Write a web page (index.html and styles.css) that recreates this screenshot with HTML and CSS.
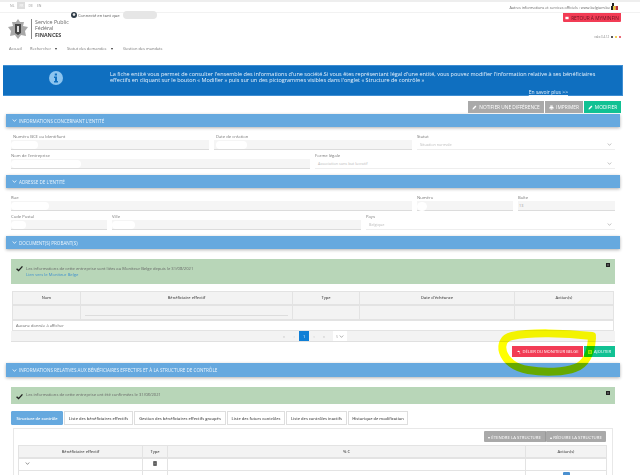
FILE: index.html
```html
<!DOCTYPE html>
<html lang="fr">
<head>
<meta charset="utf-8">
<title>Fiche entité</title>
<link rel="stylesheet" href="styles.css">
</head>
<body>
<svg class="sprite" aria-hidden="true">
  <symbol id="chev" viewBox="0 0 10 10"><path d="M1.5 3 5 6.8 8.500 3" fill="none" stroke="currentColor" stroke-width="1.800"/></symbol>
  <symbol id="check" viewBox="0 0 10 10"><path d="M.8 5.300 3.700 8 9.200 2" fill="none" stroke="currentColor" stroke-width="2"/></symbol>
  <symbol id="pencil" viewBox="0 0 10 10"><path d="M1 9 1.500 6.500 6.800 1.200 8.800 3.200 3.500 8.500Z" fill="currentColor"/></symbol>
  <symbol id="print" viewBox="0 0 10 10"><path d="M2.500 1h5v2.500h-5ZM1 4h8v3.500H7.500V6h-5v1.500H1ZM3 6.500h4V9H3Z" fill="currentColor"/></symbol>
  <symbol id="close" viewBox="0 0 10 10"><path d="M0 0h10v10H0Z" fill="#222"/><path d="M3 3l4 4M7 3 3 7" stroke="#bbb" stroke-width="1"/></symbol>
</svg>
<div class="page">
  <div class="topbar">
    <div class="langs"><span>NL</span><span class="lang-on">FR</span><span>DE</span><span>EN</span></div>
    <div class="official">Autres informations et services officiels : www.belgium.be
      <svg class="be" viewBox="0 0 7 7"><path d="M0 3h2.300v4H0Z" fill="#222"/><path d="M2.300 3h2.300v4H2.300Z" fill="#e8c82a"/><path d="M4.600 3H7v4H4.600Z" fill="#b8323c"/><path d="M1 0h2v3H1Z" fill="#222"/></svg>
    </div>
  </div>
  <header class="header">
    <div class="brand">
      <svg class="crest" viewBox="0 0 20 20"><path d="M10 0 12 3 16 3 15 7 20 8 17 12 18 17 13 16 10 20 7 16 2 17 3 12 0 8 5 7 4 3 8 3Z" fill="#a8a8a8"/><path d="M7 5h6v9l-3 2-3-2Z" fill="#444"/><path d="M9 7h2v6H9Z" fill="#ddd"/></svg>
      <div class="brand-name"><span>Service Public</span><span>Fédéral</span><strong>FINANCES</strong></div>
    </div>
    <div class="user">
      <svg class="user-icon" viewBox="0 0 6 6"><circle cx="3" cy="3" r="3" fill="#2d3a46"/><circle cx="3" cy="2.600" r="1.300" fill="#e8e8e8"/></svg>
      <span>Connecté en tant que</span><i class="mask mask-user"></i>
    </div>
    <div class="header-right">
      <a class="btn btn-back"><svg class="ico" viewBox="0 0 10 10"><path d="M1 2h8v6H1Z" fill="#fff"/></svg>RETOUR À MYMINFIN</a>
      <div class="version">vdex 3.4.12<b class="dot d1"></b><b class="dot d2"></b><b class="dot d3"></b></div>
    </div>
  </header>
  <nav class="nav">
    <a>Accueil</a><a>Rechercher<b class="caret"></b></a><a>Statut des demandes<b class="caret"></b></a><a>Gestion des mandats</a>
  </nav>
  <section class="banner">
    <svg class="info" viewBox="0 0 14 14"><circle cx="7" cy="7" r="7" fill="#8cc4ef"/><path d="M5.800 2.500h2.200v2H5.800ZM5 5.600h3v4.400h1v1.500H5V10h1V7H5Z" fill="#0f6fc0"/></svg>
    <div class="banner-body">
      <p>La fiche entité vous permet de consulter l'ensemble des informations d'une société.Si vous êtes représentant légal d'une entité, vous pouvez modifier l'information relative à ses bénéficiaires<br>effectifs en cliquant sur le bouton « Modifier » puis sur un des pictogrammes visibles dans l'onglet « Structure de contrôle »</p>
      <a>En savoir plus &gt;&gt;</a>
    </div>
  </section>
  <div class="actions">
    <a class="btn btn-grey"><svg class="ico"><use href="#pencil"/></svg>NOTIFIER UNE DIFFÉRENCE</a>
    <a class="btn btn-grey"><svg class="ico"><use href="#print"/></svg>IMPRIMER</a>
    <a class="btn btn-green"><svg class="ico"><use href="#pencil"/></svg>MODIFIER</a>
  </div>

  <h2 class="section"><svg class="ico"><use href="#chev"/></svg>INFORMATIONS CONCERNANT L'ENTITÉ</h2>
  <div class="form">
    <div class="row row-3">
      <div class="field"><label class="indent">Numéro BCE ou Identifiant</label><div class="input"><i class="mask mask-a"></i></div></div>
      <div class="field"><label class="indent">Date de création</label><div class="input"><i class="mask mask-b"></i></div></div>
      <div class="field"><label>Statut</label><div class="input select">Situation normale<svg class="ico"><use href="#chev"/></svg></div></div>
    </div>
    <div class="row row-name">
      <div class="field"><label>Nom de l'entreprise</label><div class="input"><i class="mask mask-c"></i></div></div>
      <div class="field"><label>Forme légale</label><div class="input select">Association sans but lucratif<svg class="ico"><use href="#chev"/></svg></div></div>
    </div>
  </div>

  <h2 class="section"><svg class="ico"><use href="#chev"/></svg>ADRESSE DE L'ENTITÉ</h2>
  <div class="form">
    <div class="row row-street">
      <div class="field"><label>Rue</label><div class="input"><i class="mask mask-d"></i></div></div>
      <div class="field"><label>Numéro</label><div class="input"><i class="mask mask-e"></i></div></div>
      <div class="field"><label>Boîte</label><div class="input value">13</div></div>
    </div>
    <div class="row row-city">
      <div class="field"><label>Code Postal</label><div class="input"><i class="mask mask-f"></i></div></div>
      <div class="field"><label>Ville</label><div class="input"><i class="mask mask-g"></i></div></div>
      <div class="field"><label>Pays</label><div class="input select">Belgique<svg class="ico"><use href="#chev"/></svg></div></div>
    </div>
  </div>

  <h2 class="section"><svg class="ico"><use href="#chev"/></svg>DOCUMENT(S) PROBANT(S)</h2>
  <div class="alert alert-tall">
    <svg class="alert-check"><use href="#check"/></svg>
    <div class="alert-text">Les informations de cette entreprise sont liées au Moniteur Belge depuis le 31/08/2021<a>Lien vers le Moniteur Belge</a></div>
    <svg class="alert-close"><use href="#close"/></svg>
  </div>
  <table class="grid grid-docs">
    <thead><tr><th class="c-nom">Nom</th><th class="c-ben">Bénéficiaire effectif</th><th class="c-type">Type</th><th class="c-date">Date d'échéance</th><th>Action(s)</th></tr></thead>
    <tbody>
      <tr class="filter"><td></td><td><i class="filter-line"></i></td><td></td><td></td><td></td></tr>
      <tr class="empty"><td colspan="5">Aucune donnée à afficher</td></tr>
    </tbody>
  </table>
  <div class="pager">
    <span>«</span><span>‹</span><span class="page-on">1</span><span>›</span><span>»</span>
    <span class="page-size">5<svg class="ico"><use href="#chev"/></svg></span>
  </div>
  <div class="doc-actions">
    <a class="btn btn-red"><svg class="ico" viewBox="0 0 10 10"><path d="M1 5a3 3 0 1 1 4 3L9 9 6 5Z" fill="#fff"/></svg>DÉLIER DU MONITEUR BELGE</a>
    <a class="btn btn-green"><svg class="ico" viewBox="0 0 10 10"><path d="M1 1h8v8H1Z" fill="none" stroke="#fff" stroke-width="1.500"/><path d="M5 3v4M3 5h4" stroke="#fff"/></svg>AJOUTER</a>
  </div>

  <h2 class="section section-long"><svg class="ico"><use href="#chev"/></svg>INFORMATIONS RELATIVES AUX BÉNÉFICIAIRES EFFECTIFS ET À LA STRUCTURE DE CONTRÔLE</h2>
  <div class="alert alert-short">
    <svg class="alert-check"><use href="#check"/></svg>
    <div class="alert-text">Les informations de cette entreprise ont été confirmées le 31/08/2021</div>
    <svg class="alert-close"><use href="#close"/></svg>
  </div>
  <div class="tabs">
    <a class="tab tab-on t1">Structure de contrôle</a>
    <a class="tab t2">Liste des bénéficiaires effectifs</a>
    <a class="tab t3">Gestion des bénéficiaires effectifs groupés</a>
    <a class="tab t4">Liste des futurs contrôles</a>
    <a class="tab t5">Liste des contrôles inactifs</a>
    <a class="tab t6">Historique de modification</a>
  </div>
  <div class="panel">
    <div class="panel-actions">
      <a class="btn btn-dark">▾ ÉTENDRE LA STRUCTURE</a><a class="btn btn-dark">▴ RÉDUIRE LA STRUCTURE</a>
    </div>
    <table class="grid grid-tree">
      <thead><tr><th class="c-b">Bénéficiaire effectif</th><th class="c-t">Type</th><th class="c-p">% C</th><th>Action(s)</th></tr></thead>
      <tbody>
        <tr><td class="tree-toggle"><svg class="ico"><use href="#chev"/></svg></td><td class="center"><svg class="building" viewBox="0 0 6 7"><path d="M.5 0h5v7h-5Z" fill="#333"/><path d="M1.500 1.500h3M1.500 3.500h3M1.500 5.500h3" stroke="#ddd" stroke-width=".6"/></svg></td><td></td><td></td></tr>
        <tr class="tree-2"><td></td><td></td><td></td><td class="center"><i class="blue-action"></i></td></tr>
      </tbody>
    </table>
  </div>

  <svg class="highlight" viewBox="0 0 640 475" aria-hidden="true">
    <path d="M592 336 C565 333 530 332 512 336 C503 338 501 345 503 352 C506 361 515 368 528 370 C545 373 565 372 575 368 C587 364 591 352 592 338" fill="none" stroke="#ffff00" stroke-width="8" stroke-linecap="round"/>
  </svg>
</div>
</body>
</html>
```

FILE: styles.css
```css
* { box-sizing: border-box; }
html, body { margin: 0; height: 475px; overflow: hidden; background: #fff; }
body { font-family: "Open Sans", "Liberation Sans", sans-serif; color: #555; font-size: 4px; }
.sprite { display: none; }
.page { position: relative; width: 640px; height: 475px; overflow: hidden; filter: blur(.35px); }
a { color: inherit; text-decoration: none; }
.ico { width: 5px; height: 5px; flex: none; }

.topbar { height: 12px; border-top: 2px solid #eee; display: flex; justify-content: space-between; padding: 0 22px 0 9px; }
.langs { display: flex; gap: 2px; font-size: 3.500px; color: #999; height: 7px; align-items: center; }
.langs span { padding: 0 1px; line-height: 7px; }
.langs .lang-on { background: #ddd; color: #fff; padding: 0 2px; }
.official { display: flex; align-items: flex-start; font-size: 3.750px; color: #666; gap: 1px; padding-top: 4px; line-height: 4px; white-space: nowrap; }
.be { width: 7px; height: 7px; margin-top: -3px; }

.header { position: relative; height: 29px; display: flex; background-color: #fff; background-image: radial-gradient(#dcdcdc .5px, transparent .6px); background-size: 2px 2px; border-top: 1px solid #f2f2f2; padding: 0 19px 0 8px; }
.brand { width: 63px; display: flex; align-items: center; gap: 3px; background: #fff; padding-top: 3px; height: 28px; }
.crest { width: 20px; height: 20px; }
.brand-name { display: flex; flex-direction: column; border-left: 1px solid #888; padding-left: 3px; font-size: 5.300px; line-height: 6.500px; color: #666; height: 20px; white-space: nowrap; }
.brand-name strong { color: #444; }
.user { display: flex; align-items: center; gap: 1px; height: 8px; margin-top: -2px; font-size: 4.150px; color: #555; background: transparent; position: relative; }
.user-icon { width: 6px; height: 6px; }
.header-right { margin-left: auto; display: flex; flex-direction: column; justify-content: space-between; align-items: flex-end; height: 28px; padding-bottom: 2px; }
.version { display: flex; align-items: center; font-size: 2.800px; color: #777; gap: 1px; }
.dot { width: 2px; height: 2px; border-radius: 50%; margin-left: 1px; }
.d1 { background: #222; } .d2 { background: #f0c020; } .d3 { background: #e23b4e; }

.mask { position: absolute; background: #fff; border-radius: 5px; }
.mask-user { left: 52px; top: 0; width: 34px; height: 8px; background: #e6e6e6; }

.btn { display: flex; align-items: center; justify-content: center; gap: 2px; color: #fff; font-size: 4.800px; white-space: nowrap; height: 12px; }
.btn-back { background: #f23c55; color: #6b1320; width: 58px; height: 9px; font-size: 4.800px; border-radius: 0 0 1px 1px; }
.btn-back .ico { width: 4px; height: 4px; }

.nav { height: 24px; display: flex; padding: 4px 0 0 9px; font-size: 4px; color: #777; line-height: 8px; }
.nav a { display: flex; align-items: center; height: 8px; }
.nav a:nth-child(1) { width: 21px; }
.nav a:nth-child(2) { width: 37px; }
.nav a:nth-child(3) { width: 56px; }
.caret { width: 0; height: 0; border: 1.500px solid transparent; border-top: 2px solid #333; border-bottom: 0; margin-left: 4px; }

.banner { width: 620px; height: 31px; margin-left: 3px; background: #0f6fc0; border: 1px solid #3f8ed2; border-width: 1px 1px 1px 0; display: flex; color: #e8f2fb; font-size: 5.500px; }
.info { width: 14px; height: 14px; margin: 5px 0 0 46px; flex: none; }
.banner-body { margin-left: 47px; width: 458px; padding-top: 5px; display: flex; flex-direction: column; }
.banner-body p { margin: 0; line-height: 6px; white-space: nowrap; }
.banner-body a { align-self: flex-end; text-decoration: underline; margin-top: 6px; line-height: 6px; font-size: 5px; }

.actions { height: 18px; display: flex; justify-content: flex-end; align-items: flex-end; padding: 0 19px 1px 0; gap: 1px; }
.btn-grey { background: #a9a9a9; }
.actions .btn-grey:nth-child(1) { width: 76px; }
.actions .btn-grey:nth-child(2) { width: 38px; }
.btn-green { background: #11c193; }
.actions .btn-green { width: 37px; }

.section { margin: 0 0 0 6px; width: 614px; height: 13px; background: #66a9df; color: #eaf4fc; font-size: 4.600px; font-weight: 400; display: flex; align-items: center; gap: 2px; padding-left: 6px; box-shadow: 0 1px 3px rgba(0,0,0,.3); }
.section-long { height: 14px; margin-top: 6px; }

.form { margin-left: 11px; width: 604px; padding: 7px 0 6px; display: flex; flex-direction: column; gap: 3px; }
.row { display: grid; gap: 5px; }
.row-3 { grid-template-columns: 198px 198px 198px; }
.row-name { grid-template-columns: 299px 300px; }
.row-street { grid-template-columns: 401px 96px 97px; }
.row-city { grid-template-columns: 96px 249px 249px; }
.field label { display: block; height: 6px; line-height: 6px; font-size: 4.200px; color: #777; }
.field label.indent { padding-left: 2px; }
.input { position: relative; height: 10px; background: #f5f5f5; border-bottom: 1px solid #dcdcdc; font-size: 3.800px; line-height: 9px; color: #bbb; }
.input.select { background: #fff; display: flex; justify-content: space-between; align-items: center; padding: 0 3px 0 3px; border-bottom-color: #eee; }
.input.select .ico { color: #bbb; }
.input.value { color: #999; padding-left: 1px; }
.mask-a { left: 0; top: 1px; width: 27px; height: 8px; }
.mask-b { left: 2px; top: 1px; width: 31px; height: 8px; }
.mask-c { left: 0; top: 1px; width: 70px; height: 8px; }
.mask-d { left: 0; top: 1px; width: 38px; height: 8px; }
.mask-e { left: 0; top: 1px; width: 10px; height: 9px; border-radius: 50%; }
.mask-f { left: 0; top: 1px; width: 15px; height: 8px; }
.mask-g { left: 0; top: 1px; width: 23px; height: 8px; }

.alert { position: relative; margin: 10px 0 0 11px; width: 604px; background: #b8d6b8; display: flex; font-size: 4.150px; color: #666; }
.alert-tall { height: 25px; }
.alert-short { height: 17px; }
.alert-check { width: 7px; height: 7px; margin: 6px 0 0 5px; color: #222; flex: none; }
.alert-text { margin: 7px 0 0 3px; display: flex; flex-direction: column; line-height: 6px; }
.alert-text a { color: #3d8fd0; }
.alert-short .alert-text { margin-top: 5px; }
.alert-close { position: absolute; right: 5px; top: 4px; width: 4px; height: 4px; }

.grid { border-collapse: collapse; table-layout: fixed; font-size: 4px; color: #666; }
.grid th, .grid td { border: 1px solid #e3e3e3; padding: 0; }
.grid th { background: #f3f3f3; font-weight: 600; color: #555; height: 13px; border-bottom-width: 2px; }
.grid-docs { width: 602px; margin: 7px 0 0 12px; }
.c-nom { width: 68px; } .c-ben { width: 212px; } .c-type { width: 67px; } .c-date { width: 155px; }
.filter td { background: #f3f3f3; height: 15px; border-bottom-width: 2px; vertical-align: bottom; }
.filter-line { display: block; height: 1px; background: #ddd; margin: 0 4px 3px; }
.empty td { height: 11px; padding-left: 3px; background: #fff; }
.pager { margin-left: 11px; width: 604px; height: 11px; background: #f3f3f3; border-bottom: 1px solid #e0e0e0; display: flex; align-items: center; font-size: 3.800px; color: #aaa; padding-left: 268px; }
.pager span { width: 10px; height: 10px; display: flex; align-items: center; justify-content: center; }
.pager .page-on { background: #0f7fd6; color: #fff; }
.pager .page-size { background: #fff; width: 14px; gap: 1px; margin-left: 4px; }

.doc-actions { margin: 3px 0 0 512px; width: 103px; height: 12px; display: flex; gap: 1px; }
.btn-red { background: #f23c55; width: 71px; height: 11px; margin-top: 1px; font-size: 4.100px; }
.doc-actions .btn-green { width: 31px; height: 11px; margin-top: 1px; font-size: 4.100px; }
.doc-actions .ico { width: 4px; height: 4px; }

.tabs { margin: 7px 0 0 11px; display: flex; font-size: 4px; font-weight: 600; color: #555; }
.tab { height: 14px; display: flex; align-items: center; justify-content: center; border: 1px solid #dedede; white-space: nowrap; margin-right: 1px; }
.tab-on { background: #66a9df; color: #fff; border-color: #66a9df; border-radius: 1px; }
.t1 { width: 52px; } .t2 { width: 69px; margin-right: 1px; } .t3 { width: 92px; } .t4 { width: 58px; } .t5 { width: 61px; } .t6 { width: 60px; }

.panel { margin: 3px 0 0 13px; width: 600px; border: 1px solid #e8e8e8; padding: 2px 5px 0 4px; height: 60px; }
.panel-actions { display: flex; justify-content: flex-end; padding-right: 1px; height: 14px; }
.btn-dark { background: #a9a9a9; height: 11px; font-size: 4.300px; border-radius: 1px; }
.panel-actions .btn-dark:nth-child(1) { width: 62px; border-right: 1px solid #999; }
.panel-actions .btn-dark:nth-child(2) { width: 60px; }
.grid-tree { width: 589px; }
.c-b { width: 124px; } .c-t { width: 25px; } .c-p { width: 358px; }
.grid-tree th { height: 12px; }
.grid-tree td { height: 13px; }
.tree-toggle { padding-left: 6px !important; color: #888; }
.center { text-align: center; }
.building { width: 4px; height: 5px; display: inline-block; }
.tree-2 td { vertical-align: top; }
.blue-action { display: block; width: 7px; height: 7px; background: #4a90d0; border-radius: 1px; margin: 1px auto 0; }

.highlight { position: absolute; left: 0; top: 0; width: 640px; height: 475px; mix-blend-mode: multiply; pointer-events: none; }
```
